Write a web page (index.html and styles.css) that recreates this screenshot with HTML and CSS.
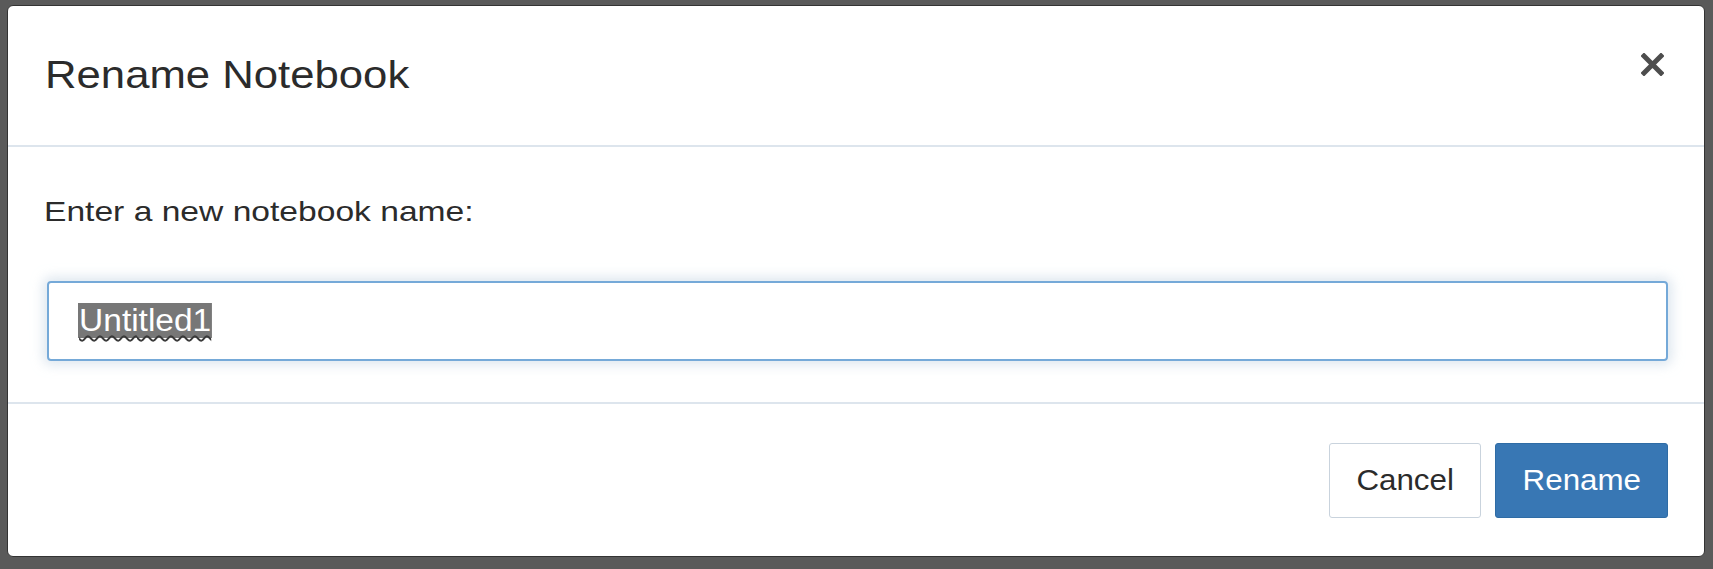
FILE: index.html
```html
<!DOCTYPE html>
<html lang="en">
<head>
<meta charset="utf-8">
<title>Rename Notebook</title>
<link rel="stylesheet" href="styles.css">
</head>
<body>
<div class="modal">
  <div class="modal-header">
    <h4 class="modal-title"><span class="stretch">Rename Notebook</span></h4>
    <button class="close" type="button" aria-label="Close">
      <svg width="23" height="23" viewBox="0 0 23 23"><path d="M3 3 L20 20 M20 3 L3 20" stroke="#4d4d4d" stroke-width="5" stroke-linecap="square" fill="none"/></svg>
    </button>
  </div>
  <div class="modal-body">
    <p class="label"><span class="stretch-l">Enter a new notebook name:</span></p>
    <div class="input">
      <span class="value"><span class="sel">Untitled1</span></span>
    </div>
  </div>
  <div class="modal-footer">
    <button class="btn btn-default" type="button"><span class="stretch-c">Cancel</span></button>
    <button class="btn btn-primary" type="button"><span class="stretch-c">Rename</span></button>
  </div>
</div>
</body>
</html>
```
FILE: styles.css
```css
html, body {
  margin: 0;
  padding: 0;
}
body {
  background: #5a5a5a;
  font-family: "Liberation Sans", Arial, sans-serif;
  color: #333;
  height: 569px;
  overflow: hidden;
}
.modal {
  margin: 5px 0 0 7px;
  width: 1698px;
  height: 552px;
  box-sizing: border-box;
  background: #fff;
  border: 1px solid #333;
  border-radius: 6px;
  display: flex;
  flex-direction: column;
}
.stretch {
  display: inline-block;
  transform: scaleX(1.12);
  transform-origin: left center;
  white-space: nowrap;
}
.stretch-l {
  display: inline-block;
  transform: scaleX(1.2);
  transform-origin: left center;
  white-space: nowrap;
}
.stretch-c {
  display: inline-block;
  transform: scaleX(1.08);
  transform-origin: center center;
  white-space: nowrap;
}
.modal-header {
  height: 139px;
  border-bottom: 2px solid #dde5ed;
  display: flex;
  justify-content: space-between;
  align-items: flex-start;
  padding: 0 40px 0 37px;
}
.modal-title {
  margin: 0;
  padding-top: 46px;
  font-size: 39px;
  line-height: 45px;
  font-weight: normal;
  color: #2b2b2b;
}
.close {
  margin-top: 47px;
  padding: 0;
  border: 0;
  background: none;
  width: 23px;
  height: 23px;
  line-height: 0;
}
.modal-body {
  height: 255px;
  border-bottom: 2px solid #dde5ed;
  padding: 0 36px 0 36px;
}
.label {
  margin: 0;
  padding-top: 48px;
  font-size: 28px;
  line-height: 34px;
  color: #2b2b2b;
}
.input {
  margin: 52px 0 0 3px;
  height: 80px;
  box-sizing: border-box;
  border: 2px solid #75a9d8;
  border-radius: 4px;
  box-shadow: 0 0 12px 4px rgba(200, 215, 228, 0.6);
  display: flex;
  align-items: center;
  padding-left: 29px;
}
.value {
  display: inline-block;
  font-size: 31px;
  line-height: 40px;
  transform: scaleX(1.08);
  transform-origin: left center;
}
.sel {
  background: #777;
  color: #fff;
  padding: 0 1px;
  text-decoration-line: underline;
  text-decoration-style: wavy;
  text-decoration-color: #3a3a3a;
  text-decoration-thickness: 2px;
  text-underline-offset: 4px;
}
.modal-footer {
  flex: 1;
  display: flex;
  justify-content: flex-end;
  align-items: flex-start;
  gap: 14px;
  padding: 39px 36px 0 0;
}
.btn {
  height: 75px;
  box-sizing: border-box;
  border-radius: 3px;
  font-family: "Liberation Sans", Arial, sans-serif;
  font-size: 29px;
  padding: 0;
}
.btn-default {
  width: 152px;
  background: #fff;
  color: #2b2b2b;
  border: 1px solid #c9d3dd;
}
.btn-primary {
  width: 173px;
  background: #3877b4;
  color: #fff;
  border: 1px solid #2f6ca5;
}
```
